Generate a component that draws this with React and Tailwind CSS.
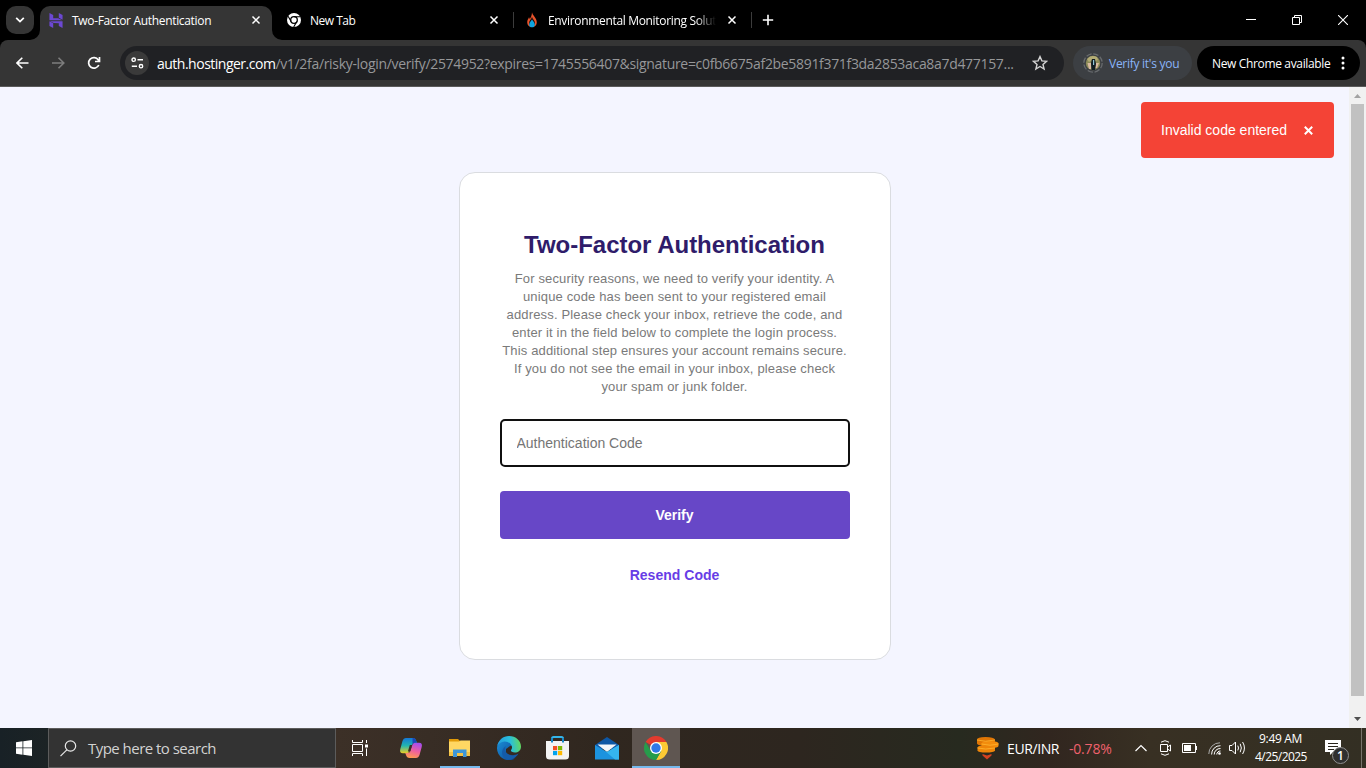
const UI = "font-['Open_Sans','Noto_Sans',sans-serif]";

function CloseX({ className = "" }) {
  return (
    <svg className={className} width="10" height="10" viewBox="0 0 10 10" fill="none" stroke="#fff" strokeWidth="1.5">
      <path d="M1.5 1.5 8.500 8.500M8.500 1.500 1.500 8.500" />
    </svg>
  );
}

function HostingerIcon() {
  return (
    <svg width="14" height="15" viewBox="0 0 14 16" fill="#6c48d2">
      <path d="M0 0 4 2.1V5.6L9.3 5.7 13.700 7.800H0Z" />
      <path d="M10 0 14 2.1V7.2L10 5.1Z" />
      <path d="M0 8.9 4 10.9V16L0 13.9Z" />
      <path d="M.4 8.700H14V16L10 13.9V10.8L4.6 10.7Z" />
    </svg>
  );
}

function ChromeMono() {
  return (
    <svg width="14" height="14" viewBox="0 0 14 14">
      <circle cx="7" cy="7" r="7" fill="#fff" />
      <circle cx="7" cy="7" r="3.3" fill="none" stroke="#000" strokeWidth="1.3" />
      <circle cx="7" cy="7" r="1.9" fill="#fff" />
      <path d="M7 3.800H13.200M4.200 8.600 1.100 3.300M9.800 8.600 6.700 14" stroke="#000" strokeWidth="1.1" fill="none" />
    </svg>
  );
}

function FlameIcon() {
  return (
    <svg width="12" height="16" viewBox="0 0 12 16">
      <path d="M6 .2C6.3 3 10.8 6 10.8 10.2 10.8 13 9 15 6 15S1.2 13 1.2 10.2C1.2 8 2.4 7.2 3 5.3 3.5 6 3.7 6.6 3.8 7.2 4.800 5.500 6 3 6 .2Z" fill="#e8532b" />
      <path d="M6 4.800C6.200 7 9 8.500 9 11.200 9 13 8 14 6 14S3 13 3 11.200C3 8.500 5.800 7 6 4.800Z" fill="#1a0d08" />
      <path d="M6 7.500C6.600 9 8.800 10.300 8.800 12.400A2.800 2.800 0 0 1 3.200 12.400C3.200 10.300 5.400 9 6 7.500Z" fill="#0ea5e0" />
    </svg>
  );
}

function TabStrip() {
  return (
    <div className={`flex h-10 w-full bg-black text-[12px] text-white ${UI}`}>
      <div className="w-10 pl-1.5 pt-1.5">
        <div className="flex h-7 w-7 items-center justify-center rounded-[10px] bg-[#353535]">
          <svg width="10" height="6" viewBox="0 0 10 6" fill="none" stroke="#fff" strokeWidth="1.8">
            <path d="M1.200 .9 5 4.600 8.800 .9" />
          </svg>
        </div>
      </div>
      <div className="relative mt-1.5 flex h-[34px] w-[232px] rounded-t-[10px] bg-[#353535]">
        <svg className="absolute -left-2.5 bottom-0" width="10" height="10" viewBox="0 0 10 10">
          <path d="M10 0V10H0A10 10 0 0 0 10 0Z" fill="#353535" />
        </svg>
        <svg className="absolute -right-2.5 bottom-0" width="10" height="10" viewBox="0 0 10 10">
          <path d="M0 0V10H10A10 10 0 0 1 0 0Z" fill="#353535" />
        </svg>
        <div className="flex h-7 w-full items-center pl-[9px] pr-[11px]">
          <HostingerIcon />
          <span className="ml-[9px] whitespace-nowrap pt-0.5 tracking-[-0.33px]">Two-Factor Authentication</span>
          <CloseX className="ml-auto" />
        </div>
      </div>
      <div className="flex h-10 w-[241px] items-center pl-[15px] pr-[14px]">
        <ChromeMono />
        <span className="ml-[9px] whitespace-nowrap pt-0.5 tracking-[-0.5px]">New Tab</span>
        <CloseX className="ml-auto" />
      </div>
      <div className="mt-3 h-4 w-px bg-[#3c3c3c]" />
      <div className="flex h-10 w-[237px] items-center pl-3 pr-[14px]">
        <FlameIcon />
        <span className="ml-[10px] w-[172px] whitespace-nowrap pt-0.5 tracking-[-0.33px] [mask-image:linear-gradient(to_right,black_148px,transparent_168px)]">
          Environmental Monitoring Solut
        </span>
        <CloseX className="ml-auto" />
      </div>
      <div className="mt-3 h-4 w-px bg-[#3c3c3c]" />
      <svg className="ml-[10px] mt-[14px]" width="12" height="12" viewBox="0 0 12 12" stroke="#fff" strokeWidth="1.600">
        <path d="M6 .8V11.200M.8 6H11.200" />
      </svg>
      <div className="ml-auto flex h-10 items-center gap-9 pr-[18px]">
        <svg width="10" height="10" viewBox="0 0 10 10"><path d="M0 4.500H10" stroke="#fff" /></svg>
        <svg width="10" height="10" viewBox="0 0 10 10" fill="none" stroke="#fff">
          <path d="M.5 2.500H7.500V9.500H.5ZM2.500 2.500V.5H9.500V7.500H7.500" />
        </svg>
        <svg width="10" height="10" viewBox="0 0 10 10" stroke="#fff" strokeWidth="1.100">
          <path d="M0 0 10 10M10 0 0 10" />
        </svg>
      </div>
    </div>
  );
}

function Toolbar() {
  return (
    <div className="bg-black">
      <div className={`flex h-[47px] w-full rounded-t-lg border-b border-[#5a5a5a] bg-[#353535] pt-1.5 ${UI}`}>
        <div className="flex h-[34px] w-[120px] items-center pl-4">
          <svg width="13" height="12" viewBox="0 0 13 12" fill="none" stroke="#fff" strokeWidth="1.600">
            <path d="M12.500 6H1.200M6.300 .7 1 6 6.300 11.300" />
          </svg>
          <svg className="ml-[23px]" width="13" height="12" viewBox="0 0 13 12" fill="none" stroke="#7d7d7d" strokeWidth="1.600">
            <path d="M0 6H11.500M6.500 .7 11.800 6 6.500 11.300" />
          </svg>
          <svg className="ml-[22px]" width="14" height="14" viewBox="0 0 14 14" fill="none" stroke="#fff" strokeWidth="1.700">
            <path d="M11.800 9A5.300 5.300 0 1 1 11.300 3.900L12.500 5.200M12.500 1V5.500H8" />
          </svg>
        </div>
        <div className="flex h-[34px] w-[944px] items-center rounded-full bg-[#202124] pl-[5px] pr-[16px]">
          <div className="flex h-6 w-6 items-center justify-center rounded-full bg-[#3a3a3a]">
            <svg width="13" height="12" viewBox="0 0 13 12" fill="none" stroke="#fff" strokeWidth="1.400">
              <circle cx="2.700" cy="2.700" r="1.700" />
              <path d="M6.500 2.700H12M.8 9.200H6" />
              <circle cx="10" cy="9.200" r="1.700" />
            </svg>
          </div>
          <div className="ml-2 flex whitespace-nowrap text-[14px]">
            <span className="tracking-[-0.5px] text-white">auth.hostinger.com</span>
            <span className="tracking-[-0.32px] text-[#969799]">
              /v1/2fa/risky-login/verify/2574952?expires=1745556407&amp;signature=c0fb6675af2be5891f371f3da2853aca8a7d477157...
            </span>
          </div>
          <svg className="ml-auto shrink-0" width="16" height="16" viewBox="0 0 16 16" fill="none" stroke="#d4d4d4" strokeWidth="1.400">
            <path d="M8 1.600 9.900 5.900 14.600 6.300 11 9.400 12.100 14 8 11.500 3.900 14 5 9.400 1.400 6.300 6.100 5.900Z" />
          </svg>
        </div>
        <div className="ml-[9px] flex h-[34px] w-[119px] items-center rounded-full bg-[#3c3f43] pl-[10px] text-[12px] text-[#8ab4f8]">
          <svg width="20" height="20" viewBox="0 0 20 20">
            <circle cx="10" cy="10" r="9.200" fill="none" stroke="#686b6e" strokeWidth="1.300" strokeDasharray="5.500 1.725" />
            <circle cx="10" cy="10" r="7.200" fill="#8c8b58" />
            <path d="M4 6Q8 1 14 4L15 7 12 8 10 6 6 9Z" fill="#b3ac75" />
            <path d="M4.500 10H8V16H6ZM13 10H16L14 15H12Z" fill="#d9b9a0" />
            <path d="M9 6H12L13 11 12 17H8.500L8 10Z" fill="#111d23" />
            <path d="M10 7H11.200V12H10Z" fill="#8fc2d2" />
          </svg>
          <span className="ml-[6px] whitespace-nowrap pt-px tracking-[-0.27px]">Verify it's you</span>
        </div>
        <div className="ml-[5px] flex h-[34px] w-[163px] items-center rounded-full bg-black pl-[15px] text-[12px] text-white">
          <span className="whitespace-nowrap pt-px tracking-[-0.35px]">New Chrome available</span>
          <svg className="ml-auto mr-[15px]" width="4" height="14" viewBox="0 0 4 14" fill="#fff">
            <circle cx="2" cy="2" r="1.500" /><circle cx="2" cy="7" r="1.500" /><circle cx="2" cy="12" r="1.500" />
          </svg>
        </div>
      </div>
    </div>
  );
}

const COPY = [
  "For security reasons, we need to verify your identity. A",
  "unique code has been sent to your registered email",
  "address. Please check your inbox, retrieve the code, and",
  "enter it in the field below to complete the login process.",
  "This additional step ensures your account remains secure.",
  "If you do not see the email in your inbox, please check",
  "your spam or junk folder.",
];

function Page() {
  return (
    <div className="flex h-[641px] w-full bg-[#f4f5ff] font-['Liberation_Sans',Arial,sans-serif]">
      <main className="relative flex-1">
        <div className="absolute right-[15px] top-[15px] flex h-14 w-[193px] items-center rounded bg-[#f44336] pl-5 text-[14px] text-white">
          <span className="whitespace-nowrap">Invalid code entered</span>
          <svg className="ml-[17px]" width="9" height="9" viewBox="0 0 9 9" stroke="#fff" strokeWidth="2">
            <path d="M.8 .8 8.200 8.200M8.200 .8 .8 8.200" />
          </svg>
        </div>
        <section className="mx-auto mt-[85px] flex h-[488px] w-[432px] flex-col items-center rounded-[16px] border border-[#dadce0] bg-white px-10 pt-[56px]">
          <h1 className="whitespace-nowrap text-[24px] font-bold leading-8 tracking-[-0.02px] text-[#2f1c6a]">Two-Factor Authentication</h1>
          <p className="mt-[9px] whitespace-nowrap text-center text-[13px] leading-[18px] tracking-[0.15px] text-[#7a7a7a]">
            {COPY.map((line) => (
              <span key={line} className="block">{line}</span>
            ))}
          </p>
          <input
            className="mt-[23px] h-12 w-[350px] shrink-0 rounded-[5px] border-2 border-[#101010] bg-white px-[15px] text-[14px] placeholder-[#757575] outline-none"
            placeholder="Authentication Code"
          />
          <button className="mt-6 h-12 w-[350px] shrink-0 rounded bg-[#6747c7] text-[14px] font-bold text-white">Verify</button>
          <a className="mt-[26px] text-[14px] font-bold leading-5 tracking-[0.02px] text-[#673de6]">Resend Code</a>
        </section>
      </main>
      <div className="flex w-[17px] flex-col items-center bg-[#f1f1f1] pt-[7px]">
        <svg width="7" height="4" viewBox="0 0 7 4" fill="#a3a3a3"><path d="M3.500 0 7 4H0Z" /></svg>
        <div className="mt-[6px] h-[592px] w-[13px] bg-[#c1c1c1]" />
        <svg className="mt-[21px]" width="7" height="4" viewBox="0 0 7 4" fill="#505050"><path d="M3.500 4 7 0H0Z" /></svg>
      </div>
    </div>
  );
}

function CopilotIcon() {
  return (
    <svg width="24" height="24" viewBox="0 0 24 24">
      <defs>
        <linearGradient id="cpA" x1="0" y1="0" x2="0" y2="1"><stop offset="0" stopColor="#1578d8" /><stop offset=".5" stopColor="#22b6b0" /><stop offset="1" stopColor="#f0cf22" /></linearGradient>
        <linearGradient id="cpB" x1="0.600" y1="0" x2="0.300" y2="1"><stop offset="0" stopColor="#a64df0" /><stop offset=".5" stopColor="#ed5fa0" /><stop offset="1" stopColor="#ff9c4d" /></linearGradient>
      </defs>
      <path d="M7 2H14Q16.500 2 17.300 5L18 7H15.500Q13.500 7 12.700 9.500L10.800 15Q10 17.300 7.500 17.300H4Q.2 17.300 1.300 13L3.500 5Q4.500 2 7 2Z" fill="url(#cpA)" />
      <path d="M17 22H10.500Q7.800 22 7 19L6.300 17H8.500Q10.800 17 11.500 14.500L13.300 9Q14 6.700 16.500 6.700H20Q23.800 6.700 22.700 11L20.500 19Q19.500 22 17 22Z" fill="url(#cpB)" />
      <path d="M13.600 2H14Q16.500 2 17.300 5L17.900 6.800H15.500Q14.300 7 13.500 8Z" fill="#1b46b8" />
      <path d="M10.800 9H13.200L11.200 15.500H8.900Z" fill="#3a2d27" />
    </svg>
  );
}

function ExplorerIcon() {
  return (
    <svg width="22" height="20" viewBox="0 0 22 20">
      <path d="M0 1H9L11 3V7H0Z" fill="#e19a08" />
      <path d="M0 3.500H10L11.500 2.500H21V18H0Z" fill="#ffd763" />
      <path d="M0 14H21V18H0Z" fill="#f6c344" />
      <path d="M4 11.500H17.500V19H14V15H8V19H4Z" fill="#3f97d8" />
    </svg>
  );
}

function EdgeIcon() {
  return (
    <svg width="24" height="24" viewBox="0 0 24 24">
      <defs>
        <linearGradient id="edA" x1="0" y1=".4" x2="1" y2=".3"><stop offset="0" stopColor="#249bdd" /><stop offset=".55" stopColor="#29bfdc" /><stop offset="1" stopColor="#66d957" /></linearGradient>
        <linearGradient id="edB" x1="0" y1="0" x2="1" y2="1"><stop offset="0" stopColor="#1b92d9" /><stop offset="1" stopColor="#0c4696" /></linearGradient>
      </defs>
      <path d="M0 12C.5 6 4 3 8 3 13 3 16 6 16 9L13 10 9 13 9 18 14 22 18 22.500A12 12 0 0 1 0 12Z" fill="url(#edB)" />
      <path d="M.3 10C1.500 4 6 0 12 0 19 0 24 5 24 10.500 24 14.500 21 16.500 18 16.500 15 16.500 13.500 15.200 14 14.200 15.400 12.500 15.200 11 14.500 9.500 13 6.500 10 5.200 7.500 5.400 4 5.600 1.500 7.500 .3 10Z" fill="url(#edA)" />
      <path d="M8.700 10C6.500 17 12 21.500 21.500 17.500 18.500 23 12 25 8 22.500 3.500 19 4.500 13 8.700 10Z" fill="#145ba9" />
      <path d="M9.500 11.500C8 17 13 20.500 21.500 17.500 23 17.500 17 20.500 13.500 19 9.500 17.200 8.500 14 9.500 11.500Z" fill="#332a25" opacity=".45" />
    </svg>
  );
}

function StoreIcon() {
  return (
    <svg width="24" height="24" viewBox="0 0 24 24">
      <path d="M6 6.500V2.500Q6 1 7.500 1H15.500Q17 1 17 2.500V6.500" fill="none" stroke="#35b5e9" strokeWidth="2" />
      <path d="M0 5H23V20Q23 23.500 19.500 23.500H3.500Q0 23.500 0 20Z" fill="#f3f3f3" />
      <path d="M6 2V6.500M17 2V6.500" stroke="#1688c9" strokeWidth="2" />
      <path d="M7 10H11.200V14.200H7Z" fill="#f25022" /><path d="M12 10H16.200V14.200H12Z" fill="#7fba00" />
      <path d="M7 15H11.200V19.200H7Z" fill="#00a4ef" /><path d="M12 15H16.200V19.200H12Z" fill="#ffb900" />
    </svg>
  );
}

function MailIcon() {
  return (
    <svg width="24" height="23" viewBox="0 0 24 23">
      <path d="M0 8 12 0 24 8V12H0Z" fill="#0d57a5" />
      <path d="M2.500 7.500H21.500L12 15Z" fill="#f2f6fa" />
      <path d="M0 8 12 15 24 8V22.500H0Z" fill="#1c93df" />
      <path d="M24 8V22.500H20L9.500 13.600 12 15Z" fill="#35b5ef" />
    </svg>
  );
}

function ChromeIcon() {
  return (
    <svg width="24" height="24" viewBox="0 0 24 24">
      <path d="M12 12 1.600 6A12 12 0 0 1 22.400 6Z" fill="#e33b2e" />
      <path d="M12 12V6H22.400A12 12 0 0 1 12 24L17.200 15Z" fill="#fcc934" />
      <path d="M12 12 17.200 15 12 24A12 12 0 0 1 1.600 6L6.800 15Z" fill="#269c4b" />
      <circle cx="12" cy="12" r="6" fill="#fff" />
      <circle cx="12" cy="12" r="4.700" fill="#3079e8" />
    </svg>
  );
}

function TaskSlot({ children, className = "" }) {
  return <div className={`flex h-10 w-[49px] items-center justify-center ${className}`}>{children}</div>;
}

function Taskbar() {
  return (
    <div className={`flex h-10 w-full bg-[linear-gradient(to_right,#182126_0px,#1c2325_48px,#3c3027_336px,#382d25_430px,#30271f_600px,#2d261f_800px,#272a1f_960px,#31261f_1050px,#383023_1150px,#332f23_1366px)] text-white ${UI}`}>
      <div className="flex w-12 items-center justify-center">
        <svg width="16" height="16" viewBox="0 0 16 16" fill="#fff">
          <path d="M0 2.200 6.500 1.300V7.500H0ZM7.300 1.200 16 0V7.500H7.300ZM0 8.300H6.500V14.700L0 13.800ZM7.300 8.300H16V16L7.300 14.800Z" />
        </svg>
      </div>
      <div className="flex h-10 w-72 items-center border border-[#5c5c5c] bg-[#333] pl-[11px]">
        <svg width="17" height="17" viewBox="0 0 17 17" fill="none" stroke="#e8e8e8" strokeWidth="1.200">
          <circle cx="10.500" cy="6" r="5.200" /><path d="M6.800 9.800 .5 16.200" />
        </svg>
        <span className="ml-[11px] whitespace-nowrap text-[15px] tracking-[-0.53px] text-[#d2d2d2]">Type here to search</span>
      </div>
      <div className="flex w-[50px] items-center justify-center pr-0.5">
        <svg width="18" height="16" viewBox="0 0 18 16" fill="none" stroke="#fff">
          <path d="M1.500 0V2.500H11.500V0M1.500 4.500H11.500V11.500H1.500ZM1.500 16V13.500H11.500V16M15.500 0V3M15.500 8.500V16" />
          <path d="M14 4.500H17V7.500H14Z" fill="#fff" stroke="none" />
        </svg>
      </div>
      <TaskSlot><CopilotIcon /></TaskSlot>
      <TaskSlot className="relative">
        <ExplorerIcon />
        <div className="absolute bottom-0 left-[5px] h-0.5 w-10 bg-[#76b9ed]" />
      </TaskSlot>
      <TaskSlot><EdgeIcon /></TaskSlot>
      <TaskSlot><StoreIcon /></TaskSlot>
      <TaskSlot><MailIcon /></TaskSlot>
      <div className="ml-px flex h-10 w-12 items-center justify-center border-b-2 border-[#76b9ed] bg-[#5f5651] pt-0.5"><ChromeIcon /></div>
      <div className="ml-auto flex h-10 items-center">
        <svg width="23" height="24" viewBox="0 0 23 24">
          <path d="M1 3.500Q1 1 9.500 1T19 3.500V7Q19 9.500 9.500 9.500T1 7Z" fill="#e07605" />
          <path d="M5.500 7.500Q5.500 5 14 5T22.500 7.500V10Q22 12 14 12T5.500 10Z" fill="#f28c0d" />
          <path d="M1.500 11.500Q2 9 10 9T19 11.500V14.500Q18 16.500 10 16.500T1.500 14.500Z" fill="#ed8509" />
          <path d="M1 4Q9 6.500 19 4M5.500 8Q14 10.500 22.500 8M1.500 12Q9 14 19 12" fill="none" stroke="#ffb52e" strokeWidth=".8" />
          <path d="M6.500 18 11 19.500 15.500 18V19.500L11 23.500 6.500 19.500Z" fill="#d54220" />
        </svg>
        <span className="ml-2 w-[62px] whitespace-nowrap text-[14px] tracking-[-0.4px]">EUR/INR</span>
        <span className="w-[66px] whitespace-nowrap text-[14px] tracking-[-0.2px] text-[#f0616d]">-0.78%</span>
        <svg width="12" height="8" viewBox="0 0 12 8" fill="none" stroke="#fff" strokeWidth="1.200"><path d="M.5 7 6 1.500 11.500 7" /></svg>
        <svg className="ml-[12px]" width="13" height="16" viewBox="0 0 13 16" fill="none" stroke="#fff">
          <path d="M1.500 4.500H8.500V11.500H1.500ZM8.500 7 11.500 5V11L8.500 9M2 2.200Q6 -.8 10 2.200M2 13.800Q6 16.800 10 13.800" />
        </svg>
        <svg className="ml-[10px]" width="15" height="10" viewBox="0 0 15 10" fill="none" stroke="#fff">
          <path d="M.5 .5H13.500V9.500H.5ZM14.500 3V7" /><path d="M2 2H9V8H2Z" fill="#fff" stroke="none" />
        </svg>
        <svg className="ml-[11px]" width="13" height="13" viewBox="0 0 13 13" fill="none" stroke="#fff">
          <path d="M.8 12A11 11 0 0 1 12 .8" stroke="#aaa" /><path d="M3.600 12.500A8.500 8.500 0 0 1 12.500 3.700M6.200 12.500A6 6 0 0 1 12.500 6.500" />
          <path d="M8.800 12.500A3.500 3.500 0 0 1 12.500 9" /><circle cx="11.500" cy="11.500" r="1.300" fill="#fff" stroke="none" />
        </svg>
        <svg className="ml-[8px]" width="17" height="14" viewBox="0 0 17 14" fill="none" stroke="#fff">
          <path d="M.5 4.500H3L6.500 1V13L3 9.500H.5ZM8.800 4.600Q10.200 7 8.800 9.400M11.200 2.800Q13.500 7 11.200 11.200M13.600 1Q17.300 7 13.600 13" />
        </svg>
        <div className="ml-[8px] flex w-[54px] flex-col items-center whitespace-nowrap text-[12px] leading-[18px]">
          <span className="pr-px tracking-[-0.35px]">9:49 AM</span>
          <span className="tracking-[-0.55px]">4/25/2025</span>
        </div>
        <div className="relative ml-[17px] h-10 w-[36px]">
          <svg className="mt-3" width="16" height="16" viewBox="0 0 16 16"><path d="M0 0H16V12H8L5 15V12H0Z" fill="#fff" /><path d="M3 3.500H13M3 6.500H13M3 9.500H9" stroke="#29251c" /></svg>
          <div className="absolute left-[7px] top-[19px] flex h-[17px] w-[17px] items-center justify-center rounded-full border border-[#909090] bg-[#30302f] text-[12px] font-semibold leading-none">1</div>
        </div>
        <div className="mr-1 h-10 w-px bg-[#77736b]" />
      </div>
    </div>
  );
}

export default function App() {
  return (
    <div className="flex h-[768px] w-[1366px] flex-col overflow-hidden">
      <TabStrip />
      <Toolbar />
      <Page />
      <Taskbar />
    </div>
  );
}
